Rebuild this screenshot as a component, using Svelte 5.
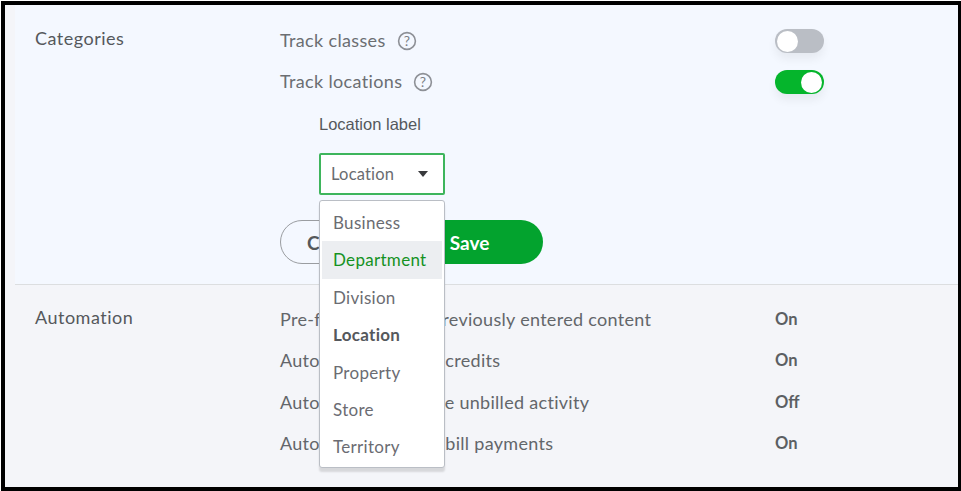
<script>
    let locationOptions = ['Business', 'Department', 'Division', 'Location', 'Property', 'Store', 'Territory'];
    let selected = 'Location';
    let hovered = 'Department';

    let automation = [
        { text: 'Pre-fill forms with previously entered content', state: 'On' },
        { text: 'Automatically apply credits', state: 'On' },
        { text: 'Automatically invoice unbilled activity', state: 'Off' },
        { text: 'Automatically apply bill payments', state: 'On' }
    ];
</script>

<main class="frame">
    <section class="categories">
        <div class="section-title">Categories</div>
        <div class="section-body">
            <div class="toggle-row first">
                <span class="row-label">Track classes</span>
                <svg class="help" viewBox="0 0 20 20" width="20" height="20">
                    <circle cx="10" cy="10" r="8.4" fill="none" stroke="#8d9096" stroke-width="1.6" />
                    <text x="10" y="15" text-anchor="middle" class="help-mark">?</text>
                </svg>
                <span class="switch off"><span class="knob"></span></span>
            </div>
            <div class="toggle-row second">
                <span class="row-label">Track locations</span>
                <svg class="help" viewBox="0 0 20 20" width="20" height="20">
                    <circle cx="10" cy="10" r="8.4" fill="none" stroke="#8d9096" stroke-width="1.6" />
                    <text x="10" y="15" text-anchor="middle" class="help-mark">?</text>
                </svg>
                <span class="switch on"><span class="knob"></span></span>
            </div>

            <div class="location-field">
                <div class="field-label">Location label</div>
                <div class="select">
                    <span>{selected}</span>
                    <span class="caret"></span>
                </div>
                <ul class="menu">
                    {#each locationOptions as option}
                        <li class:hovered={option === hovered} class:selected={option === selected}>{option}</li>
                    {/each}
                </ul>
            </div>

            <div class="actions">
                <button class="cancel">Cancel</button>
                <button class="save">Save</button>
            </div>
        </div>
    </section>

    <section class="automation">
        <div class="section-title">Automation</div>
        <div class="auto-rows">
            {#each automation as row}
                <div class="auto-row">
                    <span class="auto-text">{row.text}</span>
                    <span class="auto-state">{row.state}</span>
                </div>
            {/each}
        </div>
    </section>
</main>

<style>
    :global(body) {
        margin: 0;
        background-color: #fff;
    }

    .frame {
        box-sizing: border-box;
        width: 960px;
        height: 490px;
        margin: 1px 0 0 1px;
        border: 4px solid #000;
        border-right-width: 3px;
        background-color: #f4f5f9;
        padding-left: 10px;
        font-family: 'Lato', 'Open Sans', sans-serif;
        color: #5c5f63;
        overflow: hidden;
    }

    /* Categories */
    .categories {
        display: flex;
        height: 279px;
        padding-left: 20px;
        background-color: #f4f8ff;
        border-bottom: 1px solid #dcdee0;
    }

    .section-title {
        width: 245px;
        flex-shrink: 0;
        font-size: 18px;
        letter-spacing: 0.5px;
        line-height: 22px;
        padding-top: 22px;
        color: #55585c;
    }

    .section-body {
        position: relative;
        flex-grow: 1;
    }

    .toggle-row {
        display: flex;
        align-items: center;
        height: 24px;
    }

    .toggle-row.first {
        margin-top: 24px;
    }

    .toggle-row.second {
        margin-top: 17px;
    }

    .row-label {
        margin-top: -2px;
        font-size: 18px;
        letter-spacing: 0.35px;
        color: #6b6e72;
    }

    .help {
        margin-left: 11px;
    }

    .help-mark {
        font-family: 'Lato', sans-serif;
        font-size: 14px;
        fill: #7d8085;
    }

    .switch {
        position: absolute;
        left: 495px;
        display: flex;
        align-items: center;
        box-sizing: border-box;
        width: 49px;
        height: 24px;
        border-radius: 12px;
        padding: 0 2px;
        box-shadow: 0 6px 10px rgba(0, 0, 0, 0.06);
    }

    .switch.off {
        background-color: #babec5;
    }

    .switch.on {
        justify-content: flex-end;
        background-color: #05b52c;
    }

    .knob {
        width: 21px;
        height: 21px;
        border-radius: 50%;
        background-color: #fff;
    }

    /* Location dropdown */
    .location-field {
        position: relative;
        margin-left: 39px;
        height: 87px;
    }

    .field-label {
        padding-top: 21px;
        font-family: 'Liberation Sans', Arial, sans-serif;
        font-size: 16.5px;
        line-height: 18px;
        color: #55585c;
    }

    .select {
        display: flex;
        align-items: center;
        justify-content: space-between;
        box-sizing: border-box;
        width: 126px;
        height: 42px;
        margin-top: 20px;
        padding: 0 15px 0 10px;
        background-color: #fff;
        border: 2px solid #3eb55c;
        border-radius: 2px;
        font-size: 16.5px;
        letter-spacing: 0.2px;
        color: #696c70;
    }

    .caret {
        width: 0;
        height: 0;
        border-left: 5px solid transparent;
        border-right: 5px solid transparent;
        border-top: 6px solid #393a3d;
    }

    .menu {
        position: absolute;
        z-index: 2;
        top: 106px;
        left: 0;
        box-sizing: border-box;
        width: 126px;
        height: 268px;
        margin: 0;
        padding: 3px 2px;
        list-style: none;
        background-color: #fff;
        border: 1px solid #babec5;
        border-radius: 3px;
        box-shadow: 0 4px 2px rgba(0, 0, 0, 0.12);
    }

    .menu li {
        height: 37.4px;
        line-height: 37px;
        padding-left: 11px;
        font-size: 17px;
        letter-spacing: 0.3px;
        color: #6b6c72;
    }

    .menu li.hovered {
        background-color: #eceef1;
        color: #15921f;
    }

    .menu li.selected {
        font-weight: 700;
        color: #55585c;
    }

    .actions {
        display: flex;
        gap: 16px;
        margin-top: 39px;
        height: 44px;
    }

    .actions button {
        box-sizing: border-box;
        height: 44px;
        border-radius: 22px;
        font-family: 'Lato', sans-serif;
        font-size: 19px;
        font-weight: 700;
    }

    .cancel {
        width: 100px;
        background: transparent;
        border: 1px solid #9a9da1;
        color: #55585c;
        text-align: left;
        padding-left: 26px;
    }

    .save {
        width: 147px;
        background-color: #03a32e;
        border: none;
        color: #fff;
        padding: 0;
    }

    /* Automation */
    .automation {
        display: flex;
        padding-left: 20px;
    }

    .automation .section-title {
        padding-top: 21px;
    }

    .auto-rows {
        flex-grow: 1;
        padding-top: 14px;
    }

    .auto-row {
        display: flex;
        height: 41.3px;
        line-height: 41px;
    }

    .auto-text {
        width: 495px;
        font-size: 18px;
        letter-spacing: 0.3px;
        color: #63666a;
    }

    .auto-state {
        font-size: 16.5px;
        font-weight: 700;
        color: #5c5f63;
        line-height: 40px;
    }
</style>
